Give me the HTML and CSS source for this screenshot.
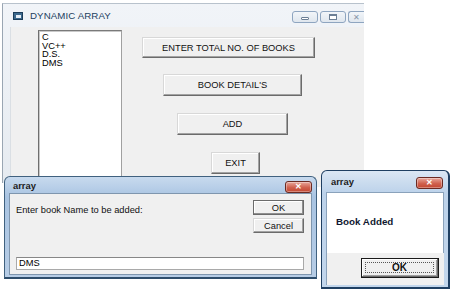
FILE: index.html
```html
<!DOCTYPE html>
<html>
<head>
<meta charset="utf-8">
<link rel="stylesheet" href="styles.css">
</head>
<body>
<div class="stage">
  <div class="main-win">
    <div class="main-title">
      <svg class="app-icon" width="10" height="8" viewBox="0 0 10 8"><rect x="0.5" y="0.5" width="9" height="7" fill="#3d6a8e" stroke="#1c3d5a"/><rect x="3" y="3" width="5" height="3" fill="#e6eef6"/></svg>
      <span class="main-caption">DYNAMIC ARRAY</span>
      <div class="win-btns">
        <span class="wbtn"><span class="min-glyph"></span></span>
        <span class="wbtn"><span class="max-glyph"></span></span>
        <span class="wbtn wclose">✕</span>
      </div>
    </div>
    <div class="main-body">
      <div class="listbox">
        <div>C</div>
        <div>VC++</div>
        <div>D.S.</div>
        <div>DMS</div>
      </div>
      <div class="btn-col">
        <div class="btn b-enter">ENTER TOTAL NO. OF BOOKS</div>
        <div class="btn b-detail">BOOK DETAIL'S</div>
        <div class="btn b-add">ADD</div>
        <div class="btn b-exit">EXIT</div>
      </div>
    </div>
  </div>

  <div class="dlg dlg-input">
    <div class="dlg-title">
      <span class="dlg-caption">array</span>
      <span class="close-btn">✕</span>
    </div>
    <div class="dlg-body input-body">
      <div class="input-top">
        <div class="prompt">Enter book Name to be added:</div>
        <div class="dlg-btns">
          <div class="btn sbtn ok-btn">OK</div>
          <div class="btn sbtn">Cancel</div>
        </div>
      </div>
      <div class="textbox">DMS</div>
    </div>
  </div>

  <div class="dlg dlg-msg">
    <div class="dlg-title msg-title">
      <span class="dlg-caption">array</span>
      <span class="close-btn">✕</span>
    </div>
    <div class="msg-body">
      <div class="msg-text">Book Added</div>
    </div>
    <div class="msg-foot">
      <div class="msg-ok"><span class="focus">OK</span></div>
    </div>
  </div>
</div>
</body>
</html>
```

FILE: styles.css
```css
* { box-sizing: border-box; }
html, body { margin: 0; padding: 0; background: #fff; }
body { font-family: "Liberation Sans", Arial, sans-serif; font-size: 9.3px; color: #000; }
.stage { position: relative; width: 455px; height: 293px; overflow: hidden; }

/* main window */
.main-win {
  position: absolute; left: 2px; top: 3px; width: 362px; height: 180px;
  border-left: 1px solid #9aa6b3; border-top: 1px solid #b8c2cc;
  background: linear-gradient(#f1f4f8, #e6ebf1);
  padding-left: 7px;
}
.main-title { height: 23px; display: flex; align-items: center; margin-left: -7px; padding-left: 10px; }
.app-icon { display: block; margin-top: 1px; }
.main-caption { margin-left: 7px; font-size: 9.7px; color: #22405f; letter-spacing: 0.1px; }
.win-btns { margin-left: auto; display: flex; gap: 2px; align-self: flex-start; margin-top: 7px; }
.wbtn {
  width: 26px; height: 12px; border: 1px solid #8ea5c0; border-radius: 3px;
  background: linear-gradient(#f2f5f9, #dfe6ee);
  display: flex; align-items: center; justify-content: center;
  font-size: 8px; color: #8796a8;
}
.wclose { width: 16px; justify-content: flex-start; padding-left: 4px; border-right: none; border-radius: 3px 0 0 3px; }
.min-glyph { width: 8px; height: 3px; background: #fff; border: 1px solid #6c7f95; border-radius: 1px; margin-top: 3px; }
.max-glyph { width: 8px; height: 6px; border: 1px solid #6c7f95; border-top-width: 2px; background: #fff; }

.main-body {
  background: #f0f0f0; height: 160px; border-left: 1px solid #dadfe4;
  display: flex; align-items: flex-start; padding: 3px 0 0 27px;
}
.listbox {
  width: 84px; height: 150px; background: #fff;
  border: 1px solid #a0a0a0; border-top-color: #7a7a7a; border-left-color: #6f6f6f;
  box-shadow: inset 1px 1px 0 #c9c9c9;
  padding: 2px 0 0 3px; line-height: 8.7px; font-size: 9.3px;
}
.btn-col { display: flex; flex-direction: column; align-items: flex-start; padding-top: 7px; margin-left: 20px; }
.btn {
  background: #f0f0f0; display: flex; align-items: center; justify-content: center;
  border: 1px solid; border-color: #d8d8d8 #6b6b6b #6b6b6b #d8d8d8;
  box-shadow: inset -1px -1px 0 #a3a3a3, inset 1px 1px 0 #fff;
  color: #111;
}
.b-enter { width: 173px; height: 21px; margin-left: 0; }
.b-detail { width: 139px; height: 22px; margin-left: 21px; margin-top: 16px; }
.b-add { width: 111px; height: 22px; margin-left: 35px; margin-top: 17px; }
.b-exit { width: 49px; height: 22px; margin-left: 69px; margin-top: 17px; }

/* dialogs */
.dlg { position: absolute; }
.dlg-title { display: flex; align-items: center; }
.dlg-caption { font-weight: bold; font-size: 9.4px; color: #1c1c1c; }
.close-btn {
  margin-left: auto; width: 27px; height: 12px; border: 1px solid #6b2a22; border-radius: 3px;
  background: linear-gradient(#e8a89c, #d0614e 55%, #c34631);
  color: #fff; font-size: 8px; font-weight: bold; line-height: 10px; text-align: center;
  box-shadow: inset 0 0 0 1px rgba(255,255,255,0.35);
}

.dlg-input {
  left: 4px; top: 176px; width: 313px; height: 103px;
  border: 1px solid #40617f; border-radius: 6px 6px 0 0;
  background: linear-gradient(#c8daee, #a9c4e2 20px, #b7cde6);
  padding: 0 4px 4px 4px;
  border-bottom: 2px solid #2f4e6c;
}
.dlg-input .dlg-title { height: 16px; padding-left: 4px; }
.dlg-input .close-btn { margin-right: 0; margin-top: 4px; }
.input-body {
  background: #f0f0f0; height: 82px; border: 1px solid #7f96ae;
  display: flex; flex-direction: column; justify-content: space-between;
  padding: 6px 7px 4px 6px;
}
.input-top { display: flex; justify-content: space-between; align-items: flex-start; }
.prompt { padding-top: 5px; color: #111; }
.dlg-btns { display: flex; flex-direction: column; gap: 3px; }
.sbtn { width: 51px; height: 15px; font-size: 9.3px; }
.ok-btn { border-color: #6b6b6b; box-shadow: inset -1px -1px 0 #8f8f8f, inset 1px 1px 0 #fff; }
.textbox {
  height: 13px; background: #fff; border: 1px solid #a9a9a9; border-top-color: #878787;
  padding: 0 0 0 2px; line-height: 11px; font-size: 9.3px;
}

.dlg-msg {
  left: 321px; top: 170px; width: 129px; height: 119px;
  border: 1px solid #1f3f62; border-radius: 6px 6px 0 0;
  border-bottom-width: 2px; border-right-width: 2px;
  background: linear-gradient(#dbe7f4, #bcd2ea 22px, #c2d6ec);
  padding: 0 4px 4px 4px;
}
.msg-title { height: 21px; padding-left: 5px; }
.msg-title .close-btn { margin-top: 2px; margin-right: 1px; }
.msg-body { background: #fff; height: 61px; border: 1px solid #8aa2bb; border-bottom: none; padding: 23px 0 0 9px; }
.msg-text { font-weight: bold; font-size: 9.8px; color: #101830; }
.msg-foot { background: #f0f0f0; height: 32px; display: flex; justify-content: flex-end; align-items: flex-start; padding: 5px 5px 0 0; border-left: 1px solid #8aa2bb; }
.msg-ok {
  width: 78px; height: 20px; background: #f0f0f0;
  border: 1px solid #1a1a1a; box-shadow: inset -1px -1px 0 #6b6b6b, inset 1px 1px 0 #fff, inset -2px -2px 0 #a0a0a0;
  padding: 3px 4px 4px 3px;
}
.focus { display: flex; align-items: center; justify-content: center; height: 100%; border: 1px dotted #555; font-weight: bold; font-size: 10px; color: #111; }
```
